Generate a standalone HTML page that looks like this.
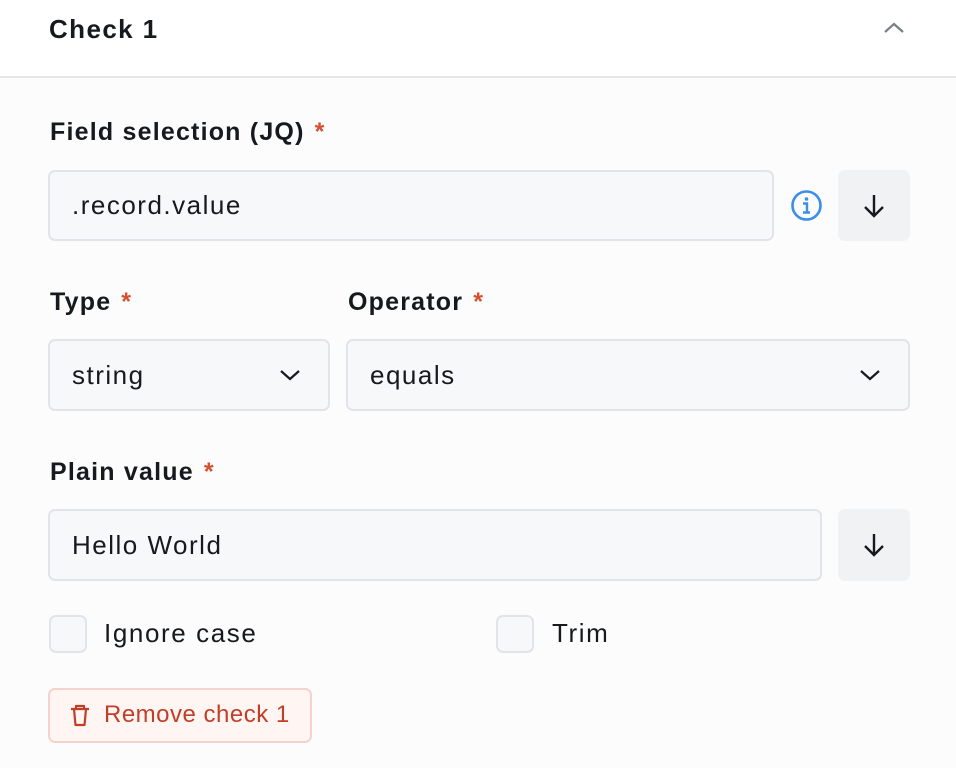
<!DOCTYPE html>
<html><head><meta charset="utf-8"><style>
*{box-sizing:border-box;margin:0;padding:0}
body{width:956px;height:768px;background:#fcfcfc;font-family:"Liberation Sans",Arial,sans-serif;color:#16191d;position:relative;overflow:hidden}
.a{position:absolute}
.hdr{left:0;top:0;width:956px;height:78px;background:#fff;border-bottom:2px solid #e6e7ea}
.lbl{font-size:25px;font-weight:bold;letter-spacing:1.2px}
.lbl span{color:#d4502f;margin-left:10px}
.inp{background:#f7f8fa;border:2px solid #e2e4e8;border-radius:7px;font-size:26px;padding-left:22px;display:flex;align-items:center;letter-spacing:1.5px}
.btn{background:#f1f2f4;border-radius:7px;display:flex;align-items:center;justify-content:center}
.cb{width:38px;height:38px;background:#f7f8fa;border:2px solid #e2e4e8;border-radius:7px}
.ct{font-size:26px;letter-spacing:1.6px}
</style></head><body>
<div class="a hdr"></div>
<div class="a lbl" style="left:49px;top:14px;font-size:26px;letter-spacing:1.4px">Check 1</div>
<svg class="a" style="left:882px;top:20px" width="24" height="16" viewBox="0 0 24 16"><path d="M3 12 L12 4 L21 12" stroke="#7a7f87" stroke-width="2.2" fill="none"/></svg>

<div class="a lbl" style="left:50px;top:118px">Field selection (JQ)<span>*</span></div>
<div class="a inp" style="left:48px;top:170px;width:726px;height:71px">.record.value</div>
<svg class="a" style="left:790px;top:189px" width="33" height="33" viewBox="0 0 33 33"><circle cx="16.5" cy="16.5" r="14" stroke="#3b8eea" stroke-width="2.6" fill="none"/><circle cx="16.5" cy="10" r="1.8" fill="#3b8eea"/><path d="M13 14.5h4v9M13 23.5h7" stroke="#3b8eea" stroke-width="2.4" fill="none"/></svg>
<div class="a btn" style="left:838px;top:170px;width:72px;height:71px"><svg width="24" height="26" viewBox="0 0 24 26"><path d="M12 2V23M3 14L12 23L21 14" stroke="#16191d" stroke-width="2.4" fill="none"/></svg></div>

<div class="a lbl" style="left:50px;top:288px">Type<span>*</span></div>
<div class="a lbl" style="left:348px;top:288px">Operator<span>*</span></div>
<div class="a inp" style="left:48px;top:339px;width:282px;height:72px">string</div>
<svg class="a" style="left:278px;top:367px" width="24" height="16" viewBox="0 0 24 16"><path d="M3 4L12 12L21 4" stroke="#16191d" stroke-width="2.2" fill="none"/></svg>
<div class="a inp" style="left:346px;top:339px;width:564px;height:72px">equals</div>
<svg class="a" style="left:858px;top:367px" width="24" height="16" viewBox="0 0 24 16"><path d="M3 4L12 12L21 4" stroke="#16191d" stroke-width="2.2" fill="none"/></svg>

<div class="a lbl" style="left:50px;top:458px">Plain value<span>*</span></div>
<div class="a inp" style="left:48px;top:509px;width:774px;height:72px">Hello World</div>
<div class="a btn" style="left:838px;top:509px;width:72px;height:72px"><svg width="24" height="26" viewBox="0 0 24 26"><path d="M12 2V23M3 14L12 23L21 14" stroke="#16191d" stroke-width="2.4" fill="none"/></svg></div>

<div class="a cb" style="left:49px;top:615px"></div>
<div class="a ct" style="left:104px;top:618px">Ignore case</div>
<div class="a cb" style="left:496px;top:615px"></div>
<div class="a ct" style="left:552px;top:618px">Trim</div>

<div class="a" style="left:48px;top:688px;width:264px;height:55px;background:#fff6f4;border:2px solid #f5d3cc;border-radius:7px"></div>
<svg class="a" style="left:69px;top:703px" width="22" height="26" viewBox="0 0 22 26"><path d="M2 6H20M7 6V3H15V6M5 6L6.5 22H15.5L17 6" stroke="#c23e26" stroke-width="2.2" fill="none" stroke-linejoin="round"/></svg>
<div class="a" style="left:104px;top:701px;font-size:24px;color:#c23e26;letter-spacing:0.5px">Remove check 1</div>
</body></html>
